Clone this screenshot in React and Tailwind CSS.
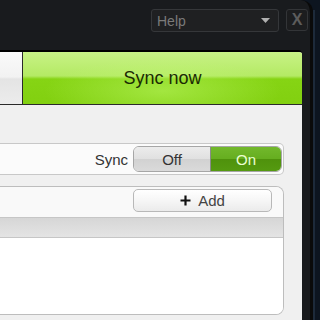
export default function App() {
  return (
    <div className="w-[320px] h-[320px] overflow-hidden bg-[#0d1520] flex" style={{ fontFamily: '"Liberation Sans", Arial, sans-serif' }}>
      <div className="w-[313px] h-full bg-[#191b1e] rounded-tr-[12px] border-r-[3px] border-[#0a0a0a] flex flex-col shrink-0">
        <div className="h-[50px] flex justify-end items-start pt-[9px] pr-[2px] gap-[7px] shrink-0">
          <div className="w-[128px] h-[23px] rounded-[3px] bg-[#1f2022] border border-[#35373a] flex items-center justify-between pl-[5px] pr-[8px]">
            <span className="text-[14px] text-[#7a7a7a] leading-none">Help</span>
            <svg width="9" height="5" viewBox="0 0 9 5"><path d="M0 0 L9 0 L4.5 5 Z" fill="#b0b0b0" /></svg>
          </div>
          <div className="w-[22px] h-[22px] rounded-[3px] bg-[#1c1d1f] border border-[#333538] flex items-center justify-center">
            <span className="text-[16px] font-bold text-[#5c5c5c] leading-none">X</span>
          </div>
        </div>
        <div className="w-[302px] flex-1 bg-[#f0f0f0] border-t-2 border-black rounded-tr-[4px] flex flex-col overflow-hidden">
          <div className="h-[53px] flex border-b border-[#2a2a2a] shrink-0">
            <div className="w-[23px] border-r border-[#2a2a2a] bg-[linear-gradient(to_bottom,#fafafa_0%,#f2f2f2_48%,#e4e4e4_52%,#ececec_100%)]" />
            <div className="flex-1 flex items-center justify-center bg-[linear-gradient(to_bottom,#c8f286_0%,#b4ea64_46%,#86d414_52%,#82d010_100%)] relative">
              <div className="absolute inset-0 bg-[radial-gradient(ellipse_at_50%_75%,rgba(200,255,120,0.45)_0%,rgba(200,255,120,0)_60%)]" />
              <span className="relative text-[18px] text-[#1a2a04] leading-none">Sync now</span>
            </div>
          </div>
          <div className="h-[38px] shrink-0" />
          <div className="w-[284px] h-[32px] bg-[#fbfbfb] border-y border-r border-[#c8c8c8] rounded-r-[5px] flex items-center justify-end pr-[1px] gap-[5px] shrink-0">
            <span className="text-[15px] text-[#333] leading-none">Sync</span>
            <div className="w-[149px] h-[26px] rounded-[6px] border border-[#a6a6a6] flex overflow-hidden">
              <div className="w-[77px] flex items-center justify-center bg-[linear-gradient(to_bottom,#ececec_0%,#e0e0e0_50%,#d2d2d2_52%,#dadada_100%)] border-r border-[#8a8a8a]">
                <span className="text-[15px] text-[#333] leading-none">Off</span>
              </div>
              <div className="flex-1 flex items-center justify-center bg-[linear-gradient(to_bottom,#72b82c_0%,#66ae20_48%,#4f920c_52%,#559a10_100%)]">
                <span className="text-[15px] text-[#eaffd2] leading-none">On</span>
              </div>
            </div>
          </div>
          <div className="h-[11px] shrink-0" />
          <div className="w-[284px] h-[129px] border-y border-r border-[#bdbdbd] rounded-r-[8px] bg-[#fefefe] flex flex-col overflow-hidden shrink-0">
            <div className="h-[30px] bg-[#f9f9f9] flex items-start justify-end pr-[11px] pt-[2px] shrink-0">
              <div className="w-[139px] h-[23px] rounded-[5px] border border-[#b8b8b8] bg-[linear-gradient(to_bottom,#ffffff_0%,#f6f6f6_50%,#ebebeb_100%)] flex items-center justify-center gap-[7px]">
                <svg width="11" height="11" viewBox="0 0 11 11"><path d="M5.5 0.5 V10.5 M0.5 5.5 H10.5" stroke="#111" strokeWidth="2.2" /></svg>
                <span className="text-[15px] text-[#444] leading-none">Add</span>
              </div>
            </div>
            <div className="h-[21px] border-y border-[#c6c6c6] bg-[linear-gradient(to_bottom,#d6d6d6_0%,#e4e4e4_100%)] shrink-0" />
            <div className="flex-1 bg-white" />
          </div>
        </div>
      </div>
      <div className="w-[2px] h-full bg-[#1d2a3a] mt-[10px]" />
    </div>
  );
}
